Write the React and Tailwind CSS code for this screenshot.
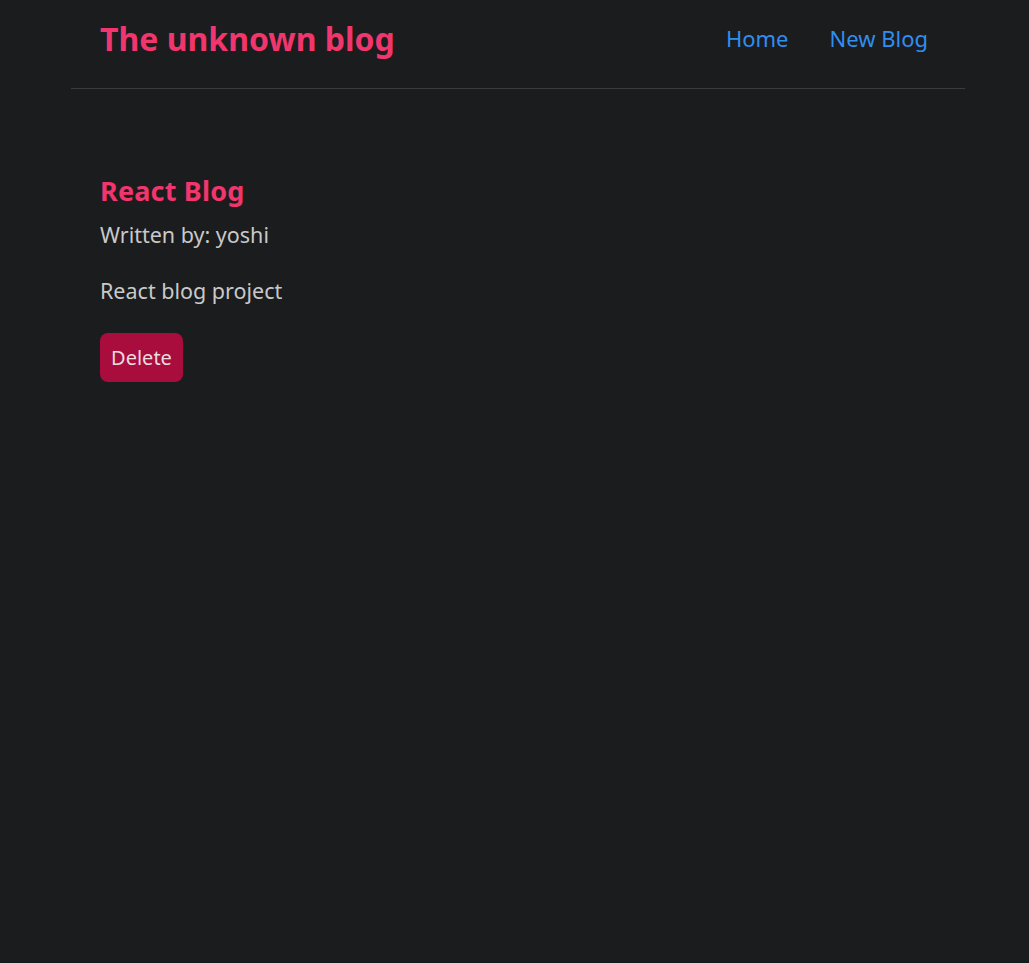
export default function App() {
  return (
    <div className="min-h-[963px] bg-[#1b1c1e] font-['Noto_Sans',sans-serif] border-b-2 border-[#0c1f1d]">
      <div className="mx-[71px] w-[894px]">
        <nav className="h-[89px] flex items-center justify-between pl-[29px] pr-[37px] border-b border-[#3b3c3e]">
          <h1 className="text-[32px] font-bold text-[#f1356d] leading-none -mt-[11px]">The unknown blog</h1>
          <div className="flex gap-[41px] text-[22px] text-[#2f8ef0] -mt-[11px]">
            <a>Home</a>
            <a>New Blog</a>
          </div>
        </nav>
        <div className="pl-[29px] pt-[86px]">
          <h2 className="text-[27px] font-bold text-[#f1356d] leading-[32px] tracking-[0.2px]">React Blog</h2>
          <p className="mt-[14px] text-[21.5px] text-[#c9c9c9] leading-[28px]">Written by: yoshi</p>
          <p className="mt-[28px] text-[21.5px] text-[#c9c9c9] leading-[28px]">React blog project</p>
          <button className="mt-[28px] h-[49px] w-[83px] rounded-[8px] bg-[#a80d3d] text-[20px] text-[#e8dde0]">Delete</button>
        </div>
      </div>
    </div>
  );
}
